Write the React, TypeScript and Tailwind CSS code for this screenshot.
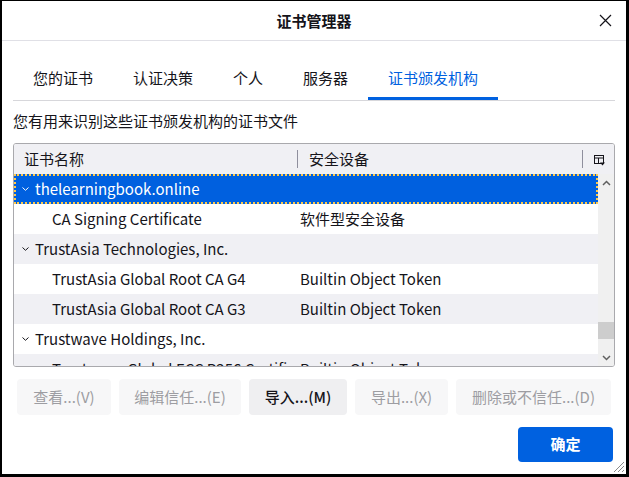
import React from "react";

const font = { fontFamily: '"Noto Sans CJK SC", "Noto Sans", sans-serif' };

const tabs = ["您的证书", "认证决策", "个人", "服务器", "证书颁发机构"];

type Row = { kind: "group" | "cert"; name: string; device?: string };

const rows: Row[] = [
  { kind: "group", name: "thelearningbook.online" },
  { kind: "cert", name: "CA Signing Certificate", device: "软件型安全设备" },
  { kind: "group", name: "TrustAsia Technologies, Inc." },
  { kind: "cert", name: "TrustAsia Global Root CA G4", device: "Builtin Object Token" },
  { kind: "cert", name: "TrustAsia Global Root CA G3", device: "Builtin Object Token" },
  { kind: "group", name: "Trustwave Holdings, Inc." },
  { kind: "cert", name: "Trustwave Global ECC P256 Certification Authority", device: "Builtin Object Token" },
];

const buttons = [
  { label: "查看...(V)", w: "w-[94px]", on: false },
  { label: "编辑信任...(E)", w: "w-[122px]", on: false },
  { label: "导入...(M)", w: "w-[98px]", on: true },
  { label: "导出...(X)", w: "w-[93px]", on: false },
  { label: "删除或不信任...(D)", w: "w-[155px]", on: false },
];

function Chevron({ color }: { color: string }) {
  return (
    <svg width="9" height="6" viewBox="0 0 9 6" className="shrink-0">
      <path d="M1.5 1.5 L4.5 4.3 L7.5 1.5" fill="none" stroke={color} strokeWidth="1" />
    </svg>
  );
}

function ColumnPicker() {
  return (
    <svg width="11" height="11" viewBox="0 0 11 11">
      <rect x="0.5" y="0.5" width="9" height="8" fill="none" stroke="#15141a" strokeWidth="1" />
      <line x1="0.5" y1="3" x2="9.5" y2="3" stroke="#15141a" strokeWidth="1" />
      <line x1="4.5" y1="3" x2="4.5" y2="8.5" stroke="#15141a" strokeWidth="1" />
      <path d="M6 7.5 H11 L8.5 10.5 Z" fill="#15141a" />
    </svg>
  );
}

export default function App() {
  return (
    <div className="w-[629px] h-[477px] bg-black pt-px pl-[2px] pr-[3px] pb-[3px]" style={font}>
      <div className="relative flex h-full flex-col bg-white text-[#15141a]">
        {/* title bar */}
        <header className="relative flex h-[40px] shrink-0 items-center justify-center border-b border-[#e0e0e6]">
          <h1 className="text-[15px] font-bold leading-5">证书管理器</h1>
          <button className="absolute right-[14px] top-[13px] flex h-[13px] w-[13px] items-center justify-center">
            <svg width="13" height="13" viewBox="0 0 13 13">
              <path d="M1 1 L12 12 M12 1 L1 12" stroke="#15141a" strokeWidth="1.2" />
            </svg>
          </button>
        </header>

        {/* tabs */}
        <nav className="mx-[11px] mt-[15px] flex border-b border-[#d7d7db]">
          {tabs.map((t, i) => (
            <div
              key={t}
              className={
                i === 4
                  ? "flex h-[44px] items-center border-b-[3px] border-[#0061e0] px-[20px] pt-[3px] text-[15px] text-[#0061e0]"
                  : "flex h-[44px] items-center border-b-[3px] border-transparent px-[20px] pt-[3px] text-[15px]"
              }
            >
              {t}
            </div>
          ))}
        </nav>

        <p className="mx-[11px] mt-[10px] text-[15px] leading-5">您有用来识别这些证书颁发机构的证书文件</p>

        {/* tree */}
        <div className="mx-[11px] mt-[12px] h-[224px] w-[602px] overflow-hidden rounded-[3px] border border-[#a9a9ad]">
          <div className="flex h-[30px] items-center bg-[#f0f0f4] text-[15px]">
            <div className="w-[283px] pl-[10px]">证书名称</div>
            <div className="h-[18px] w-px bg-[#8f8f9d]" />
            <div className="w-[284px] pl-[11px]">安全设备</div>
            <div className="h-[18px] w-px bg-[#8f8f9d]" />
            <div className="flex flex-1 justify-center pl-[2px] pt-[2px]">
              <ColumnPicker />
            </div>
          </div>
          <div className="flex h-[192px]">
            <div className="w-[584px] overflow-hidden">
              {rows.map((r, i) => {
                const selected = i === 0;
                const bg = selected ? "bg-[#0060df] text-white border-2 border-dotted border-[#ffc94a]" : i % 2 === 0 ? "bg-[#f0f0f4]" : "bg-white";
                return (
                  <div key={i} className={`flex h-[30px] shrink-0 items-center whitespace-nowrap text-[15px] ${bg}`}>
                    {r.kind === "group" ? (
                      <div className={selected ? "flex w-[286px] items-center gap-[5px] pl-[5px]" : "flex w-[286px] items-center gap-[5px] pl-[7px]"}>
                        <Chevron color={selected ? "#ffffff" : "#15141a"} />
                        <span>{r.name}</span>
                      </div>
                    ) : (
                      <div className="w-[286px] overflow-hidden pl-[38px]">{r.name}</div>
                    )}
                    <div className="flex-1 overflow-hidden">{r.device}</div>
                  </div>
                );
              })}
            </div>
            {/* scrollbar */}
            <div className="flex w-[16px] flex-col bg-[#f0f0f0]">
              <div className="flex h-[17px] items-center justify-center">
                <svg width="9" height="6" viewBox="0 0 9 6">
                  <path d="M1 5 L4.5 1.5 L8 5" fill="none" stroke="#606060" strokeWidth="1.5" />
                </svg>
              </div>
              <div className="flex-1" />
              <div className="mb-[11px] h-[17px] bg-[#cdcdcd]" />
              <div className="flex h-[16px] items-center justify-center">
                <svg width="9" height="6" viewBox="0 0 9 6">
                  <path d="M1 1 L4.5 4.5 L8 1" fill="none" stroke="#606060" strokeWidth="1.5" />
                </svg>
              </div>
            </div>
          </div>
        </div>

        {/* action buttons */}
        <div className="mt-[12px] flex gap-[8px] px-[15px]">
          {buttons.map((b) => (
            <button
              key={b.label}
              className={
                b.on
                  ? `${b.w} flex h-[36px] items-center justify-center rounded-[4px] bg-[#efeff1] text-[15px] font-medium text-[#15141a]`
                  : `${b.w} flex h-[36px] items-center justify-center rounded-[4px] bg-[#f7f7f8] text-[15px] text-[#9d9da2]`
              }
            >
              {b.label}
            </button>
          ))}
        </div>

        <div className="mt-[12px] flex justify-end pr-[13px]">
          <button className="flex h-[35px] w-[95px] items-center justify-center rounded-[4px] bg-[#0061e0] text-[15px] font-bold text-white">
            确定
          </button>
        </div>

        {/* resize grip */}
        <svg className="absolute bottom-[1px] right-[1px]" width="13" height="13" viewBox="0 0 13 13">
          <path d="M12 2 L2 12 M12 6 L6 12 M12 10 L10 12" stroke="#8a8a8a" strokeWidth="1" />
        </svg>
      </div>
    </div>
  );
}
